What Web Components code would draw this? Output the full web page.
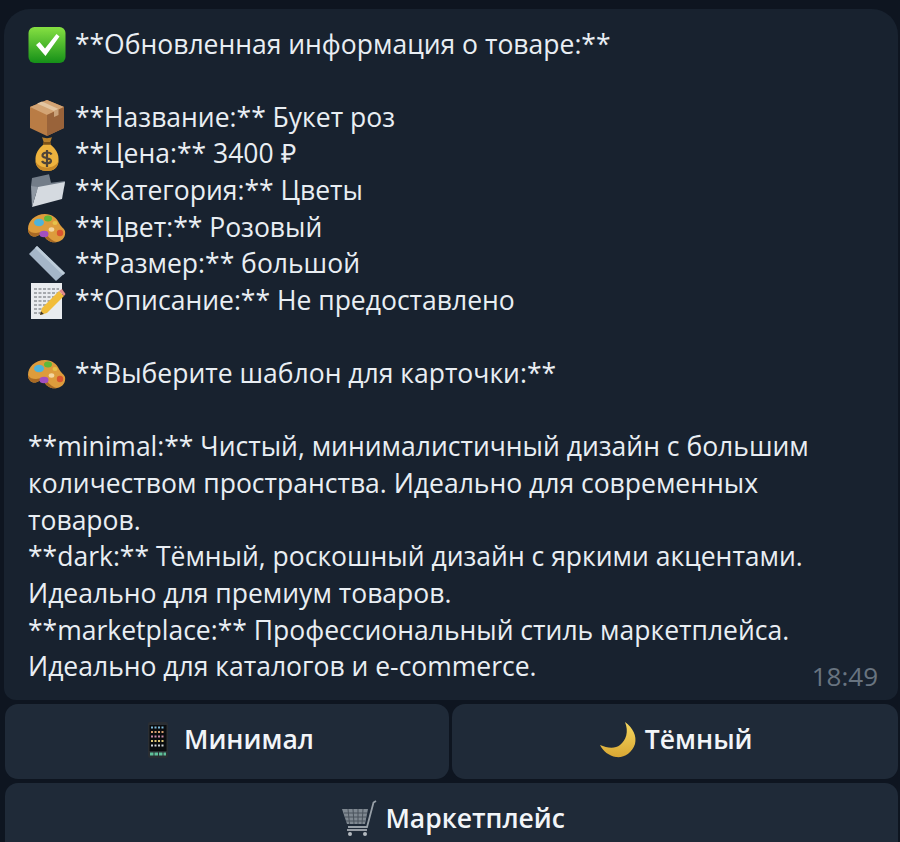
<!DOCTYPE html>
<html lang="ru">
<head>
<meta charset="utf-8">
<title>Чат</title>
<style>
    html, body { margin: 0; height: 842px; overflow: hidden; background: #0e1520; }
    chat-keyboard { margin-top: 4px; }
</style>
</head>
<body>
<chat-message time="18:49">
    <text-line><chat-emoji name="check"></chat-emoji> **Обновленная информация о товаре:**</text-line>
    <text-line></text-line>
    <text-line><chat-emoji name="box"></chat-emoji> **Название:** Букет роз</text-line>
    <text-line><chat-emoji name="money"></chat-emoji> **Цена:** 3400 ₽</text-line>
    <text-line><chat-emoji name="folder"></chat-emoji> **Категория:** Цветы</text-line>
    <text-line><chat-emoji name="palette"></chat-emoji> **Цвет:** Розовый</text-line>
    <text-line><chat-emoji name="ruler"></chat-emoji> **Размер:** большой</text-line>
    <text-line><chat-emoji name="memo"></chat-emoji> **Описание:** Не предоставлено</text-line>
    <text-line></text-line>
    <text-line><chat-emoji name="palette"></chat-emoji> **Выберите шаблон для карточки:**</text-line>
    <text-line></text-line>
    <text-line>**minimal:** Чистый, минималистичный дизайн с большим</text-line>
    <text-line>количеством пространства. Идеально для современных</text-line>
    <text-line>товаров.</text-line>
    <text-line>**dark:** Тёмный, роскошный дизайн с яркими акцентами.</text-line>
    <text-line>Идеально для премиум товаров.</text-line>
    <text-line>**marketplace:** Профессиональный стиль маркетплейса.</text-line>
    <text-line>Идеально для каталогов и e-commerce.</text-line>
</chat-message>
<chat-keyboard>
    <chat-button><chat-emoji name="phone"></chat-emoji> Минимал</chat-button>
    <chat-button><chat-emoji name="moon"></chat-emoji> Тёмный</chat-button>
    <chat-button wide><chat-emoji name="cart"></chat-emoji> Маркетплейс</chat-button>
</chat-keyboard>
<script>
const EMOJI = {
    check: `<defs><linearGradient id="g" x1="0" y1="0" x2="0" y2="1"><stop offset="0" stop-color="#86e042"/><stop offset="1" stop-color="#159018"/></linearGradient></defs>
        <rect x="-.5" y="0" width="37" height="36" rx="6" fill="url(#g)"/>
        <path d="M7 18l3.500-3 5.500 6.500L27.500 7l3 2.500L16.500 29z" fill="#fff"/>`,
    box: `<path d="M18 0L35 7v21L18 36 1 28V7z" fill="#b97c45"/>
        <path d="M1 7l17 8 17-8L18 0z" fill="#d3a474"/>
        <path d="M18 15v21l17-8V7z" fill="#99633a"/>
        <path d="M8 3.500l17 7.500 4.500-2L13 1.500z" fill="#e4c6a2"/>
        <path d="M25 11v6l4.500-2V9z" fill="#c9a27a"/>`,
    money: `<path d="M13 1c2 1.500 8 1.500 10 0l-2 6h-6z" fill="#b9802c"/>
        <path d="M15 8h6c6 5 9 10 8.500 17-.5 7-5.500 10-11.500 10S7 32 6.500 25C6 18 9 13 15 8z" fill="#eeb33e"/>
        <path d="M6.500 25c.5 7 5.500 10 11.500 10s11-3 11.500-10c-2 4.500-7 6.500-11.500 6.500S8.500 29.500 6.500 25z" fill="#c98a28"/>
        <rect x="14" y="6" width="8" height="2.800" rx="1.200" fill="#7d5218"/>
        <path d="M22.500 18.500c-1-2.500-8-3-9 .5-1 3.500 9 2.500 8.500 6-.5 3-7.500 3-9 0M18 14v17" fill="none" stroke="#4f4438" stroke-width="2.200"/>`,
    folder: `<path d="M2 13l1-8 17-3.700 2 8.400L36 8 35 14 8 20z" fill="#737d89"/>
        <path d="M3 34L9 14l27-5-3 17z" fill="#d5dae0"/>
        <path d="M2 13l1 21 6-20z" fill="#8f98a3"/>`,
    palette: `<path d="M16 4C6 4-1 11-1 19c0 6 5 9 9 7 3-1.500 6-2 8 1 2 4 7 6 12 5 6-1 9-6 8-11-1-3-4-4-6-8C28 8 23 4 16 4z" fill="#dd9c3c"/>
        <path d="M-1 19c0 6 5 9 9 7 3-1.500 6-2 8 1 2 4 7 6 12 5-6-1-9-6-12-9-3-2-6 0-9 0-4 0-6-1-8-4z" fill="#a96a24"/>
        <ellipse cx="10" cy="12.500" rx="5" ry="3.800" fill="#4fb3d9"/>
        <ellipse cx="19" cy="8.500" rx="4" ry="3" fill="#5fb83a"/>
        <ellipse cx="15" cy="24" rx="4.500" ry="3.300" fill="#a24fc0"/>
        <ellipse cx="26" cy="13" rx="2.500" ry="2" fill="#e6c24a"/>
        <ellipse cx="31" cy="23" rx="3.200" ry="3.200" fill="#d9552f"/>
        <ellipse cx="22.500" cy="19.500" rx="2.800" ry="2.200" fill="#f4d6a0"/>`,
    ruler: `<path d="M0 8l8-8 28 27-9 8z" fill="#a5b6c8"/>
        <path d="M8 0l28 27-2 2L6 2z" fill="#bdccd9"/>`,
    memo: `<rect x="2" y="0" width="31" height="36" fill="#e9ecef"/>
        <path d="M5 6h25M5 10h25M5 14h22M5 18h17M5 22h12M5 26h9M5 30h8" stroke="#8f9398" stroke-width="1.400" stroke-dasharray="3 1.500"/>
        <path d="M13 25l-2 7 7-2 17-17-5-5z" fill="#f1bd3a"/>
        <path d="M30 8l5 5 1.500-2-3.500-5z" fill="#e48a8a"/>
        <path d="M11 32l1-3.800 2.800 2.800z" fill="#40352a"/>`,
    phone: `<rect x="8" y="0" width="20" height="36" rx="2" fill="#2a2e33"/>
        <rect x="9.500" y="3" width="17" height="26" fill="#0a0c0e"/>
        <path d="M11 5.500h14" stroke="#7bb8d8" stroke-width="2" stroke-dasharray="2 1.500"/>
        <path d="M11 10h14" stroke="#d8a070" stroke-width="2" stroke-dasharray="2 1.500"/>
        <path d="M11 14.500h14" stroke="#c98aa8" stroke-width="2" stroke-dasharray="2 1.500"/>
        <path d="M11 19h14" stroke="#e0c878" stroke-width="2" stroke-dasharray="2 1.500"/>
        <path d="M11 23.500h14" stroke="#cfd4d8" stroke-width="2" stroke-dasharray="2 1.500"/>
        <path d="M10 32h16" stroke="#5fc09a" stroke-width="3" stroke-dasharray="3.500 1"/>`,
    moon: `<defs><linearGradient id="m" x1="0" y1="0" x2="0" y2="1"><stop offset="0" stop-color="#f6d860"/><stop offset="1" stop-color="#d9a733"/></linearGradient></defs>
        <path d="M25 0c8 6 12 14 10 22-3 9-11 14-19 13-7-1-13-6-16-12 7 3 15 4 20 0 6-5 9-13 5-23z" fill="url(#m)"/>`,
    cart: `<path d="M1 8h26l-3 15H6z" fill="#7f8891"/>
        <path d="M3 12h23M4 16h21M5 20h19M7 8l1.500 15M12 8l1 15M17 8v15M22 8l-1 15" stroke="#4a535d" stroke-width="1"/>
        <path d="M35 0l-2.500 1.500L26 26H7" fill="none" stroke="#98a0a8" stroke-width="1.800"/>
        <path d="M6 29h20" stroke="#b4bac0" stroke-width="1.600"/>
        <circle cx="9" cy="33" r="2" fill="#b4bac0"/><circle cx="24" cy="33" r="2" fill="#b4bac0"/>`
};

class ChatEmoji extends HTMLElement {
    connectedCallback() {
        this.attachShadow({ mode: 'open' });
        this.shadowRoot.innerHTML = `
            <style>
                :host {
                    display: inline-block;
                    width: 36px;
                    height: 36px;
                    margin: 0 3px 0 1px;
                    vertical-align: -9px;
                }
                :host([name="phone"]) { margin: 0 1px 0 0; }
                :host([name="moon"]), :host([name="cart"]) { margin: 0 1.500px 0 3px; }
                svg { display: block; width: 100%; height: 100%; overflow: visible; }
            </style>
            <svg viewBox="0 0 36 36" xmlns="http://www.w3.org/2000/svg">${EMOJI[this.getAttribute('name')]}</svg>
        `;
    }
}

class TextLine extends HTMLElement {
    constructor() {
        super();
        this.attachShadow({ mode: 'open' });
        this.shadowRoot.innerHTML = `
            <style>
                :host { display: block; height: 36.64px; line-height: 36.64px; white-space: nowrap; }
            </style>
            <slot></slot>
        `;
    }
}

class ChatMessage extends HTMLElement {
    constructor() {
        super();
        this.attachShadow({ mode: 'open' });
        this.shadowRoot.innerHTML = `
            <style>
                :host {
                    display: block;
                    position: relative;
                    box-sizing: border-box;
                    height: 691px;
                    margin: 9px 2px 0 4px;
                    padding: 16.500px 20px 0 24px;
                    background: #18222f;
                    border-radius: 26px 26px 12px 12px;
                    color: #e9eef3;
                    font: 26.5px/36.64px "Open Sans", sans-serif;
                }
                .time {
                    position: absolute;
                    right: 20px;
                    bottom: 7px;
                    color: #687480;
                    font-size: 26px;
                    line-height: 34px;
                }
            </style>
            <slot></slot>
            <span class="time"></span>
        `;
    }

    connectedCallback() {
        this.shadowRoot.querySelector('.time').textContent = this.getAttribute('time');
    }
}

class ChatKeyboard extends HTMLElement {
    constructor() {
        super();
        this.attachShadow({ mode: 'open' });
        this.shadowRoot.innerHTML = `
            <style>
                :host {
                    display: grid;
                    grid-template-columns: 444px 446px;
                    grid-auto-rows: 75px;
                    gap: 4px 3px;
                    padding: 0 2px 0 5px;
                }
            </style>
            <slot></slot>
        `;
    }
}

class ChatButton extends HTMLElement {
    constructor() {
        super();
        this.attachShadow({ mode: 'open' });
        this.shadowRoot.innerHTML = `
            <style>
                :host {
                    display: block;
                    background: #1f2a38;
                    border-radius: 13px;
                    color: #f2f5f8;
                    font: 600 26.5px/71px "Open Sans", sans-serif;
                    text-align: center;
                    white-space: nowrap;
                }
                :host([wide]) { grid-column: 1 / -1; }
            </style>
            <slot></slot>
        `;
    }
}

customElements.define('chat-emoji', ChatEmoji);
customElements.define('text-line', TextLine);
customElements.define('chat-message', ChatMessage);
customElements.define('chat-keyboard', ChatKeyboard);
customElements.define('chat-button', ChatButton);
</script>
</body>
</html>
